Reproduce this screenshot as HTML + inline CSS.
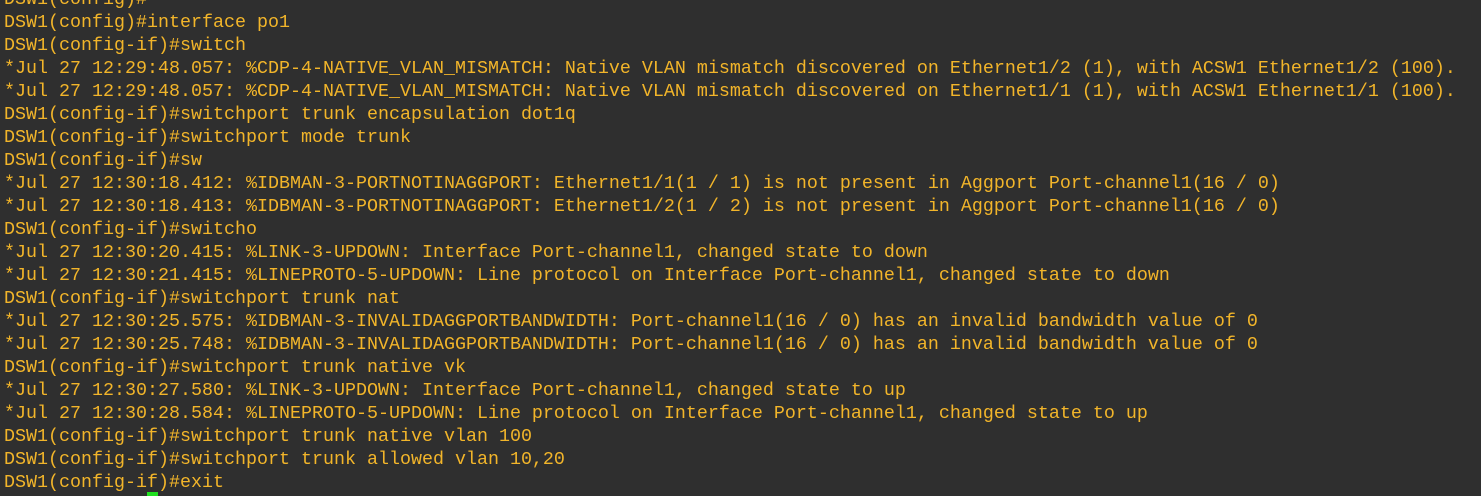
<!DOCTYPE html>
<html><head><style>
html,body{margin:0;padding:0;background:#2f2f2f;width:1481px;height:496px;overflow:hidden}
pre{margin:0;position:absolute;left:4px;top:-12px;font-family:"Liberation Mono",monospace;font-size:18.33px;line-height:23px;color:#f2b52a;white-space:pre}
.cur{position:absolute;left:147px;top:492px;width:11px;height:4px;background:#1fe01f}
</style></head><body>
<pre>DSW1(config)#
DSW1(config)#interface po1
DSW1(config-if)#switch
*Jul 27 12:29:48.057: %CDP-4-NATIVE_VLAN_MISMATCH: Native VLAN mismatch discovered on Ethernet1/2 (1), with ACSW1 Ethernet1/2 (100).
*Jul 27 12:29:48.057: %CDP-4-NATIVE_VLAN_MISMATCH: Native VLAN mismatch discovered on Ethernet1/1 (1), with ACSW1 Ethernet1/1 (100).
DSW1(config-if)#switchport trunk encapsulation dot1q
DSW1(config-if)#switchport mode trunk
DSW1(config-if)#sw
*Jul 27 12:30:18.412: %IDBMAN-3-PORTNOTINAGGPORT: Ethernet1/1(1 / 1) is not present in Aggport Port-channel1(16 / 0)
*Jul 27 12:30:18.413: %IDBMAN-3-PORTNOTINAGGPORT: Ethernet1/2(1 / 2) is not present in Aggport Port-channel1(16 / 0)
DSW1(config-if)#switcho
*Jul 27 12:30:20.415: %LINK-3-UPDOWN: Interface Port-channel1, changed state to down
*Jul 27 12:30:21.415: %LINEPROTO-5-UPDOWN: Line protocol on Interface Port-channel1, changed state to down
DSW1(config-if)#switchport trunk nat
*Jul 27 12:30:25.575: %IDBMAN-3-INVALIDAGGPORTBANDWIDTH: Port-channel1(16 / 0) has an invalid bandwidth value of 0
*Jul 27 12:30:25.748: %IDBMAN-3-INVALIDAGGPORTBANDWIDTH: Port-channel1(16 / 0) has an invalid bandwidth value of 0
DSW1(config-if)#switchport trunk native vk
*Jul 27 12:30:27.580: %LINK-3-UPDOWN: Interface Port-channel1, changed state to up
*Jul 27 12:30:28.584: %LINEPROTO-5-UPDOWN: Line protocol on Interface Port-channel1, changed state to up
DSW1(config-if)#switchport trunk native vlan 100
DSW1(config-if)#switchport trunk allowed vlan 10,20
DSW1(config-if)#exit</pre>
<div class="cur"></div>
</body></html>
